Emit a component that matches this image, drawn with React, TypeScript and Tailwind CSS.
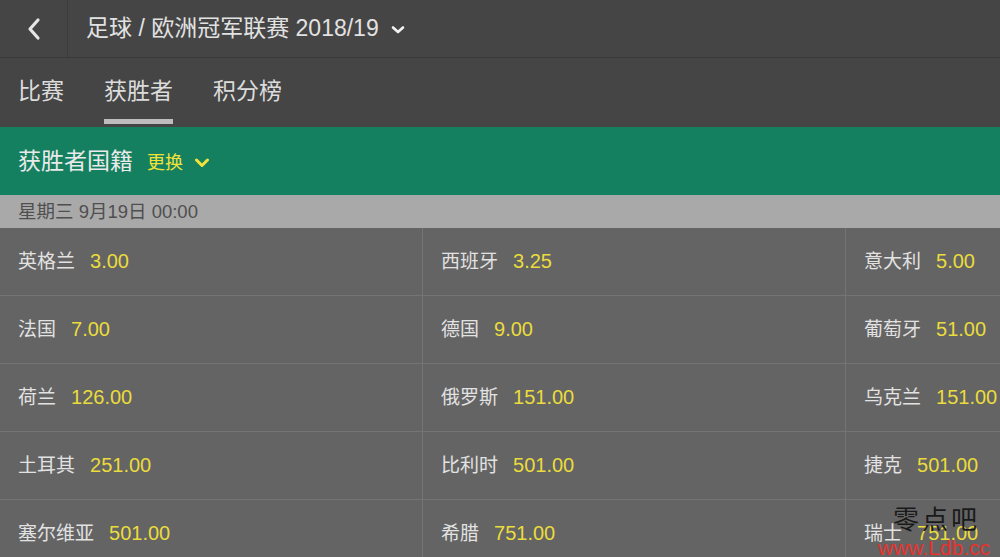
import React from "react";

const rows: [string, string][][] = [
  [["英格兰", "3.00"], ["西班牙", "3.25"], ["意大利", "5.00"]],
  [["法国", "7.00"], ["德国", "9.00"], ["葡萄牙", "51.00"]],
  [["荷兰", "126.00"], ["俄罗斯", "151.00"], ["乌克兰", "151.00"]],
  [["土耳其", "251.00"], ["比利时", "501.00"], ["捷克", "501.00"]],
  [["塞尔维亚", "501.00"], ["希腊", "751.00"], ["瑞士", "751.00"]],
];

const font = { fontFamily: '"Liberation Sans", "Noto Sans CJK SC", sans-serif' };

export default function App() {
  return (
    <div
      className="relative w-[1000px] h-[557px] overflow-hidden bg-[#454545] text-[#e0e0e0]"
      style={font}
    >
      {/* Header */}
      <div className="flex h-[58px] border-b border-[#3a3a3a]">
        <div className="w-[68px] flex items-center justify-center border-r border-[#3c3c3c]">
          <svg width="16" height="24" viewBox="0 0 16 24">
            <path d="M12 3 L4 12 L12 21" stroke="#e6e6e6" strokeWidth="3.2" fill="none" strokeLinecap="round" strokeLinejoin="round" />
          </svg>
        </div>
        <div className="flex items-center pl-[18px] text-[23px] text-[#e2e2e2]">
          <span>足球 / 欧洲冠军联赛 2018/19</span>
          <svg className="ml-[12px] mt-[2px]" width="14" height="10" viewBox="0 0 14 10">
            <path d="M2 2.5 L7 7 L12 2.5" stroke="#f2f2f2" strokeWidth="2.6" fill="none" strokeLinecap="round" strokeLinejoin="round" />
          </svg>
        </div>
      </div>

      {/* Tabs */}
      <div className="flex h-[69px] pl-[18px] text-[23px] text-[#dcdcdc]">
        <div className="flex items-center pb-[3px]">比赛</div>
        <div className="relative flex items-center ml-[40px] pb-[3px]">
          获胜者
          <div className="absolute left-0 right-0 bottom-[3px] h-[5px] bg-[#bdbdbd]" />
        </div>
        <div className="flex items-center ml-[40px] pb-[3px]">积分榜</div>
      </div>

      {/* Green bar */}
      <div className="flex items-center h-[68px] bg-[#14805f] pl-[18px]">
        <div className="flex items-baseline">
          <span className="text-[23px] text-[#eaeaea]">获胜者国籍</span>
          <span className="ml-[14px] text-[18px] text-[#f2e23a]">更换</span>
        </div>
        <svg className="ml-[11px] mt-[4px]" width="16" height="10" viewBox="0 0 16 10">
          <path d="M2.5 2 L8 7.5 L13.5 2" stroke="#f2e23a" strokeWidth="3" fill="none" strokeLinecap="round" strokeLinejoin="round" />
        </svg>
      </div>

      {/* Date bar */}
      <div className="flex items-center h-[33px] bg-[#a9a9a9] pl-[18px] text-[18.5px] text-[#4f4f4f]">
        星期三 9月19日 00:00
      </div>

      {/* Grid */}
      <div className="bg-[#646464]">
        {rows.map((row, i) => (
          <div key={i} className="grid grid-cols-[423px_423px_423px] h-[68px] border-b border-[#747474]">
            {row.map(([name, odd], j) => (
              <div
                key={j}
                className={`flex items-center pl-[18px] pb-[1px] ${j < 2 ? "border-r border-[#747474]" : ""}`}
              >
                <div className="flex items-baseline">
                  <span className="text-[19px] text-[#e2e2e2]">{name}</span>
                  <span className="ml-[15px] text-[20px] text-[#eadc3c]">{odd}</span>
                </div>
              </div>
            ))}
          </div>
        ))}
      </div>

      {/* Watermark */}
      <div
        className="absolute left-[893px] top-[505px] text-[26px] leading-none text-[#1a1a1a] tracking-[3px]"
        style={{ fontFamily: '"Noto Sans CJK SC", serif' }}
      >
        零点吧
      </div>
      <div
        className="absolute left-[878px] top-[537px] text-[21px] leading-none text-[#e8322e]"
        style={{ fontFamily: '"Liberation Sans", sans-serif' }}
      >
        www.Ldb.cc
      </div>
    </div>
  );
}
